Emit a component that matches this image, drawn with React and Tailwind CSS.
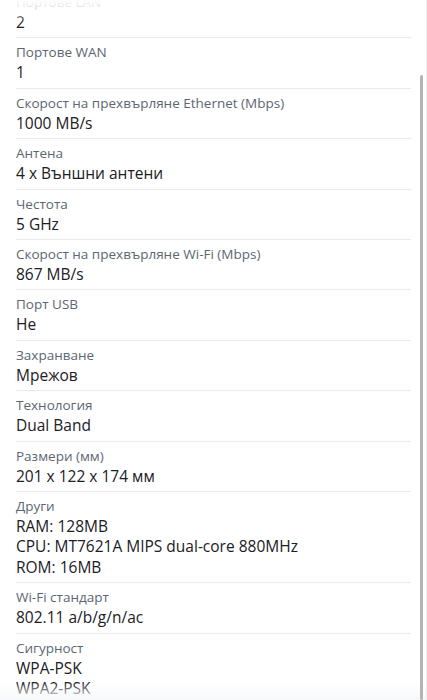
import React from 'react';

const specs = [
  { label: 'Портове LAN', values: ['2'] },
  { label: 'Портове WAN', values: ['1'] },
  { label: 'Скорост на прехвърляне Ethernet (Mbps)', values: ['1000 MB/s'] },
  { label: 'Антена', values: ['4 x Външни антени'] },
  { label: 'Честота', values: ['5 GHz'] },
  { label: 'Скорост на прехвърляне Wi-Fi (Mbps)', values: ['867 MB/s'] },
  { label: 'Порт USB', values: ['Не'] },
  { label: 'Захранване', values: ['Мрежов'] },
  { label: 'Технология', values: ['Dual Band'] },
  { label: 'Размери (мм)', values: ['201 x 122 x 174 мм'] },
  { label: 'Други', values: ['RAM: 128MB', 'CPU: MT7621A MIPS dual-core 880MHz', 'ROM: 16MB'] },
  { label: 'Wi-Fi стандарт', values: ['802.11 a/b/g/n/ac'] },
  { label: 'Сигурност', values: ['WPA-PSK', 'WPA2-PSK'] },
];

export default function App() {
  return (
    <div className="relative h-[700px] w-[427px] overflow-hidden bg-white font-['Open_Sans',sans-serif]">
      <div className="-mt-[12px] pl-4 pr-4">
        {specs.map((s) => (
          <div key={s.label} className="border-b border-[#e8eaed] pt-[5px] pb-[5px]">
            <div className="text-[13.5px] leading-[19px] text-[#5c6671]">{s.label}</div>
            {s.values.map((v) => (
              <div key={v} className="text-[15.5px] leading-[20.4px] font-medium text-[#1b2025]">
                {v}
              </div>
            ))}
          </div>
        ))}
      </div>

      {/* scroll fades */}
      <div className="pointer-events-none absolute inset-x-0 top-0 h-[22px] bg-gradient-to-b from-white via-white/70 to-white/0" />
      <div className="pointer-events-none absolute inset-x-0 bottom-0 h-[18px] bg-gradient-to-t from-[#f7f8f9] to-white/0" />

      {/* scrollbar */}
      <div className="absolute right-[4px] top-[75px] bottom-0 w-[3px] rounded-sm bg-[#b4b4b4]" />
      <div className="absolute right-0 top-0 bottom-0 w-px bg-[#ececec]" />
    </div>
  );
}
